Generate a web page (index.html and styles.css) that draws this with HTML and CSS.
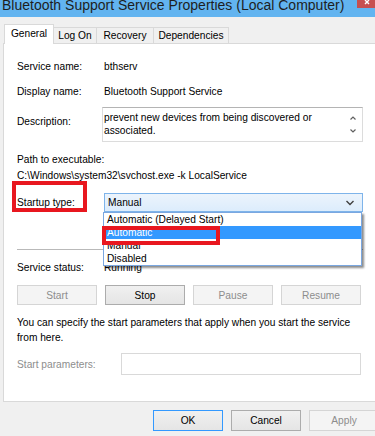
FILE: index.html
```html
<!DOCTYPE html>
<html lang="en">
  <head>
    <meta charset="UTF-8" />
    <title>Bluetooth Support Service Properties</title>
    <link rel="stylesheet" href="styles.css">
  </head>
  <body>
    <div class="window">
      <div class="titlebar">
        <span class="title">Bluetooth Support Service Properties (Local Computer)</span>
        <span class="close">
          <svg width="18" height="8" viewBox="0 0 18 8">
            <path d="M8 0 L12 4 M12 0 L8 4" stroke="#fff" stroke-width="1.4" fill="none" />
          </svg>
        </span>
      </div>

      <div class="tabs">
        <span class="tab active tab-general">General</span>
        <span class="tab tab-logon">Log On</span>
        <span class="tab tab-recovery">Recovery</span>
        <span class="tab tab-deps">Dependencies</span>
      </div>

      <div class="panel">
        <div class="row first">
          <span class="label">Service name:</span>
          <span>bthserv</span>
        </div>
        <div class="row">
          <span class="label">Display name:</span>
          <span>Bluetooth Support Service</span>
        </div>
        <div class="row desc-row">
          <span class="label desc-label">Description:</span>
          <div class="desc-box">
            <div class="desc-text">prevent new devices from being discovered or<br />associated.</div>
            <svg class="scroll" width="18" height="33" viewBox="0 0 18 33">
              <path d="M6.5 11.5 L9 9 L11.5 11.5" stroke="#606060" stroke-width="1.2" fill="none" />
              <path d="M6.5 21.5 L9 24 L11.5 21.5" stroke="#606060" stroke-width="1.2" fill="none" />
            </svg>
          </div>
        </div>
        <div class="path">
          <div>Path to executable:</div>
          <div>C:\Windows\system32\svchost.exe -k LocalService</div>
        </div>
        <div class="row startup-row">
          <span class="label startup-label">Startup type:
            <span class="mark mark-label"></span>
          </span>
          <div class="combo">
            <span class="combo-value">Manual</span>
            <svg width="10" height="6" viewBox="0 0 10 6">
              <path d="M1.5 1 L5 4.5 L8.5 1" stroke="#404040" stroke-width="1.4" fill="none" />
            </svg>
            <ul class="dropdown">
              <li>Automatic (Delayed Start)</li>
              <li class="selected">Automatic</li>
              <li>Manual</li>
              <li>Disabled</li>
            </ul>
            <span class="mark mark-item"></span>
          </div>
        </div>
        <div class="separator"></div>
        <div class="row status-row">
          <span class="label">Service status:</span>
          <span>Running</span>
        </div>
        <div class="buttons">
          <span class="btn disabled">Start</span>
          <span class="btn">Stop</span>
          <span class="btn disabled">Pause</span>
          <span class="btn disabled">Resume</span>
        </div>
        <p class="info">You can specify the start parameters that apply when you start the service<br />from here.</p>
        <div class="row params-row">
          <span class="label params-label">Start parameters:</span>
          <div class="params-box"></div>
        </div>
      </div>

      <div class="footer">
        <span class="btn default">OK</span>
        <span class="btn">Cancel</span>
        <span class="btn disabled">Apply</span>
      </div>
    </div>
  </body>
</html>
```

FILE: styles.css
```css
body {
  margin: 0;
  overflow: hidden;
  background-color: #f0f0f0;
  font-family: "Liberation Sans", Arial, sans-serif;
  font-size: 10.2px;
  color: #000;
}

.window {
  width: 375px;
  height: 436px;
  overflow: hidden;
  background-color: #f0f0f0;
}

/* title bar */
.titlebar {
  height: 17px;
  display: flex;
  align-items: flex-start;
  overflow: hidden;
  background-color: #62b4f0;
}

.titlebar .title {
  margin: -2px 0 0 2px;
  font-size: 14px;
  line-height: 14px;
  color: #1e1e1e;
  white-space: nowrap;
}

.titlebar .close {
  margin-left: auto;
  width: 18px;
  height: 8px;
  background-color: #c75050;
}

.titlebar .close svg {
  display: block;
}

/* tabs */
.tabs {
  height: 26px;
  display: flex;
  align-items: flex-end;
  padding-left: 4px;
  position: relative;
  z-index: 1;
}

.tab {
  box-sizing: border-box;
  height: 16px;
  margin-left: -1px;
  border: 1px solid #d9d9d9;
  border-bottom: none;
  background-color: #f0f0f0;
  line-height: 15px;
  text-align: center;
}

.tab.active {
  height: 20px;
  margin-left: 0;
  margin-bottom: -1px;
  background-color: #fff;
  line-height: 17px;
}

.tab-general {
  width: 50px;
}

.tab-logon {
  width: 44px;
}

.tab-recovery {
  width: 58px;
}

.tab-deps {
  width: 76px;
}

/* tab page */
.panel {
  margin: 0 -10px 0 3px;
  padding: 16px 0 26px 13px;
  border: 1px solid #d9d9d9;
  background-color: #fff;
}

.row {
  display: flex;
  align-items: center;
  line-height: 13px;
  margin-top: 12px;
}

.row.first {
  margin-top: 0;
}

.label {
  width: 87px;
  flex: none;
}

.desc-row {
  margin-top: 9px;
  align-items: flex-start;
}

.desc-label {
  width: 85px;
  margin-top: 8px;
}

.desc-box {
  width: 261px;
  height: 35px;
  box-sizing: border-box;
  display: flex;
  border: 1px solid #dcdcdc;
  border-top-color: #b4b4b4;
}

.desc-text {
  flex: 1;
  padding: 3px 0 0 1px;
}

.scroll {
  flex: none;
}

.path {
  margin-top: 10px;
  line-height: 16px;
}

.startup-row {
  margin-top: 9px;
}

.startup-label {
  position: relative;
}

.combo {
  position: relative;
  width: 259px;
  height: 19px;
  box-sizing: border-box;
  display: flex;
  align-items: center;
  justify-content: space-between;
  padding: 0 7px 0 3px;
  border: 1px solid #7eb4ea;
  background: linear-gradient(#ecf4fc, #dcecfc);
}

/* the open list of the combo box lies over the rows below */
.dropdown {
  position: absolute;
  left: -2px;
  top: 18px;
  width: 259px;
  box-sizing: border-box;
  margin: 0;
  padding: 0;
  list-style: none;
  border: 1px solid #7aa7e0;
  background-color: #fff;
  box-shadow: 2px 2px 2px rgba(0, 0, 0, 0.45);
  z-index: 2;
}

.dropdown li {
  height: 13px;
  line-height: 13px;
  padding-left: 3px;
}

.dropdown li.selected {
  background-color: #3399ff;
  color: #fff;
}

/* red annotation frames */
.mark {
  position: absolute;
  box-sizing: border-box;
  border: 4px solid #e8171f;
  z-index: 3;
}

.mark-label {
  left: -5px;
  top: -15px;
  width: 75px;
  height: 31px;
}

.mark-item {
  left: -3px;
  top: 32px;
  width: 118px;
  height: 19px;
}

.separator {
  width: 346px;
  height: 1px;
  margin-top: 37px;
  background-color: #b9b9b9;
}

.status-row {
  margin-top: 11px;
}

.buttons {
  display: flex;
  gap: 8px;
  margin-top: 11px;
}

.btn {
  box-sizing: border-box;
  width: 80px;
  height: 20px;
  display: flex;
  align-items: center;
  justify-content: center;
  border: 1px solid #acacac;
  background: linear-gradient(#f0f0f0, #e5e5e5);
}

.btn.disabled {
  border-color: #d5d5d5;
  background: #f4f4f4;
  color: #8d8d8d;
}

.btn.default {
  border-color: #3399ff;
}

.info {
  margin: 10px 0 0;
  line-height: 15px;
}

.params-row {
  margin-top: 8px;
}

.params-label {
  width: 104px;
  color: #8d8d8d;
}

.params-box {
  width: 240px;
  height: 22px;
  box-sizing: border-box;
  border: 1px solid #d9d9d9;
  background-color: #fff;
}

/* dialog buttons */
.footer {
  display: flex;
  gap: 8px;
  margin-top: 8px;
  padding-left: 153px;
}

.footer .btn {
  width: 70px;
  height: 21px;
  flex: none;
}
```
